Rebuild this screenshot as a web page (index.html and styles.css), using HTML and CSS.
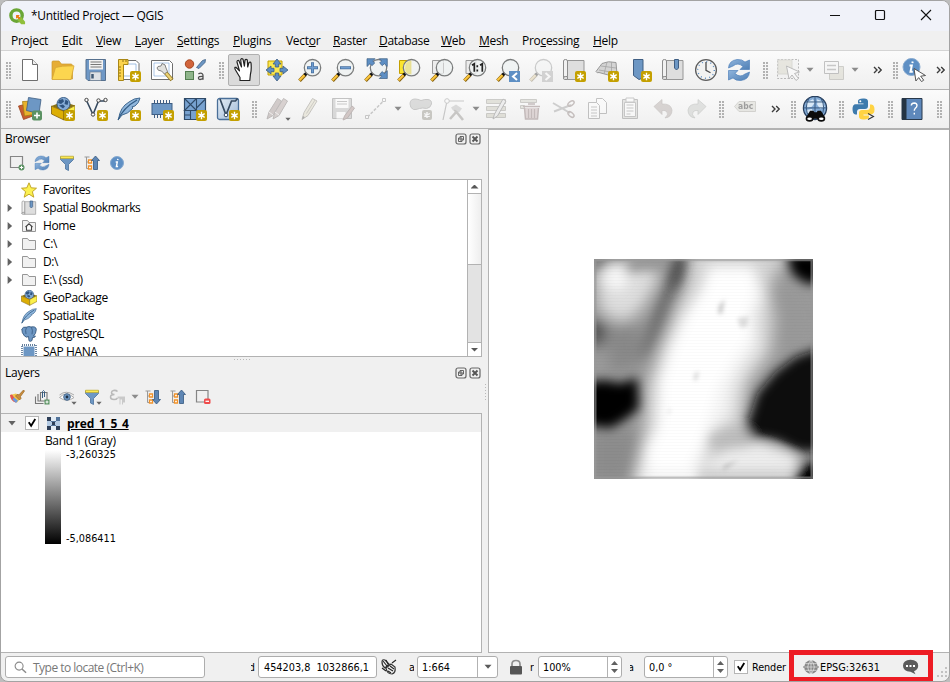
FILE: index.html
```html
<!DOCTYPE html>
<html lang="en">
<head>
<meta charset="utf-8">
<title>*Untitled Project — QGIS</title>
<link rel="stylesheet" href="styles.css">
</head>
<body>
<svg class="defs" width="0" height="0" aria-hidden="true">
  <defs>
    <linearGradient id="gBlue" x1="0" y1="0" x2="1" y2="1"><stop offset="0" stop-color="#8fb4dc"/><stop offset="1" stop-color="#4f7fb5"/></linearGradient>
    <linearGradient id="gPale" x1="0" y1="0" x2="1" y2="1"><stop offset="0" stop-color="#e6eef6"/><stop offset="1" stop-color="#9db8d6"/></linearGradient>
  </defs>
  <symbol id="badge" viewBox="0 0 24 24"><rect x="13" y="13" width="11" height="11" rx="2" fill="#c4a000"/><path d="M18.500 14.800v7.400M15.300 16.700l6.400 3.600M21.700 16.700l-6.400 3.600" stroke="#fff" stroke-width="1.400"/><circle cx="18.500" cy="18.500" r="1.800" fill="#fff"/></symbol>
  <symbol id="lens" viewBox="0 0 24 24"><path d="M1.500 22.700l5.700-5.900" stroke="#8a6410" stroke-width="3.600"/><path d="M1.500 22.300l5.400-5.600" stroke="#fcc63d" stroke-width="2"/><path d="M6.600 17.200l2.400-2.400" stroke="#111" stroke-width="3.200"/><circle cx="14.500" cy="9.700" r="8.200" fill="#eef1f2" fill-opacity=".82" stroke="#7b7d7d" stroke-width="1.300"/></symbol>
  <symbol id="drop" viewBox="0 0 8 6"><path d="M.5.800h7L4 4.800z" fill="#8b8b8b"/></symbol>
  <symbol id="more" viewBox="0 0 10 8"><path d="M1 1l3 3-3 3M5.200 1l3 3-3 3" fill="none" stroke="#3c3c3c" stroke-width="1.400"/></symbol>

  <symbol id="new" viewBox="0 0 24 24"><path d="M4.500 1.500h10l5 5v16h-15z" fill="#fff" stroke="#6e6e6e"/><path d="M14.500 1.500v5h5" fill="#eee" stroke="#6e6e6e"/></symbol>
  <symbol id="open" viewBox="0 0 24 24"><path d="M1 21V4q0-1 1-1h6l2.500 3H20q1.500 0 1.500 2v13z" fill="#e6ad35" stroke="#c99a2e" stroke-width=".7"/><path d="M4.500 9.500l7-1.300 11.500-.4-3 13.700H1z" fill="#fcd64f" stroke="#d6a634" stroke-width=".8"/></symbol>
  <symbol id="save" viewBox="0 0 24 24"><path d="M3 1.500h18.500v21H4l-2-2v-19z" fill="#6f98c6" stroke="#56708e"/><rect x="5" y="2" width="14" height="9.500" fill="#f2f2f2"/><path d="M6.500 4h11M6.500 6.500h11M6.500 9h11" stroke="#777"/><rect x="6" y="14" width="11" height="8.500" fill="#dde1e5" stroke="#68788a" stroke-width=".6"/><path d="M8.500 16v4.500" stroke="#415a75" stroke-width="2.500"/></symbol>
  <symbol id="layout" viewBox="0 0 24 24"><path d="M2 2.500h17l3 3v16H2z" fill="#fff" stroke="#6e6e6e"/><path d="M5 6h14v12H5z" fill="none" stroke="#8bb0dc" stroke-width=".8"/><path d="M1.500 1.500H11v5H6.500v16h-5z" fill="#fbd34c" stroke="#a98716"/><path d="M2 9h2M2 12h2M2 15h2M2 18h2M6 2v2M9 2v2" stroke="#87680c" stroke-width=".9"/><use href="#badge"/></symbol>
  <symbol id="manager" viewBox="0 0 24 24"><path d="M1.500 2.500h18l3 3v16h-21z" fill="#fff" stroke="#6e6e6e"/><path d="M4 5h15v13H4z" fill="none" stroke="#8bb0dc" stroke-width=".7"/><path d="M15 14l7 8" stroke="#907520" stroke-width="4"/><path d="M15 14l6.500 7.500" stroke="#ecd274" stroke-width="2.500"/><path d="M8 8.500l3-.5 1-2.500q4 .5 4 4.500l1.500 3.500-3 2.500-3-3q-4 0-4.500-3z" fill="#e2e2df" stroke="#666" stroke-width=".8"/></symbol>
  <symbol id="style" viewBox="0 0 24 24"><circle cx="6.500" cy="6" r="4.200" fill="#d1643b" stroke="#a64721"/><path d="M13.500 9.500l6-7 3-1-.5 3-6 6z" fill="#6d97c4" stroke="#3f5e83" stroke-width=".8"/><rect x="2.500" y="13.500" width="8" height="8" fill="#8fb58b" stroke="#537e50"/><path d="M15.400 15.900q2.500-1.500 4 0 .6.700.6 1.800v4M20 18.300q-4.600-.2-4.600 1.700 0 1.500 1.600 1.500 2.500 0 3-1.800" fill="none" stroke="#515151" stroke-width="1.300"/></symbol>

  <symbol id="hand" viewBox="0 0 24 24"><path d="M8 22.500v-3L3.500 12q-1.500-3 .4-2.700l3.600 3.500L5 4q0-2 1.800-1.500L9.500 9 8.700 1.700Q9.500-.2 11 1.200l1.400 7L13 2.100q1-1.500 2.300-.1l.4 7L17 4.500q1.300-1 2 .4.700 7-.6 11.600l-.6 6z" fill="#fff" stroke="#222" stroke-width="1.200" stroke-linejoin="round"/></symbol>
  <symbol id="pansel" viewBox="0 0 24 24"><path d="M3 3h14v14H3z" fill="#fce94f" stroke="#c4a000"/><g fill="#5e8fc4" stroke="#3d5e83" stroke-width=".8"><path d="M12 1l4 5h-2.300v3h-3.400V6H8z"/><path d="M12 23l4-5h-2.300v-3h-3.400v3H8z"/><path d="M1 12l5-4v2.300h3v3.400H6V16z"/><path d="M23 12l-5-4v2.300h-3v3.400h3V16z"/></g></symbol>
  <symbol id="zin" viewBox="0 0 24 24"><use href="#lens"/><path d="M14.500 4.200v11M9 9.700h11" stroke="#47709f" stroke-width="3"/><path d="M14.500 5v9.400M9.800 9.700h9.400" stroke="#6f9dd1" stroke-width="1.600"/></symbol>
  <symbol id="zout" viewBox="0 0 24 24"><use href="#lens"/><path d="M9 9.700h11" stroke="#47709f" stroke-width="3"/><path d="M9.800 9.700h9.400" stroke="#6f9dd1" stroke-width="1.600"/></symbol>
  <symbol id="zfull" viewBox="0 0 24 24"><use href="#lens"/><g fill="#5e8fc4" stroke="#3d5e83" stroke-width=".7"><path d="M3 .7h8L8.700 3l2 2L8 7.700l-2-2-3 2.800z"/><path d="M23.300.7h-8L17.600 3l-2 2 2.700 2.700 2-2 3 2.800z"/><path d="M23.300 20.500h-8l2.300-2.300-2-2 2.700-2.700 2 2 3-2.800z"/></g></symbol>
  <symbol id="zsel" viewBox="0 0 24 24"><path d="M2.500 2.500h11v13h-11z" fill="#fce52f" stroke="#c4a000"/><use href="#lens"/><path d="M9 5.500q2-2.500 5.500-3v14q-6-.5-6.500-6z" fill="#e8dd79" opacity=".65"/></symbol>
  <symbol id="zlay" viewBox="0 0 24 24"><path d="M2.500 2.500h11v13h-11z" fill="#ececec" stroke="#9a9a9a"/><use href="#lens"/><path d="M13.500 5v10" stroke="#c9c9c9"/></symbol>
  <symbol id="znat" viewBox="0 0 24 24"><path d="M3 2.500h10v13H3z" fill="#ececec" stroke="#9a9a9a"/><use href="#lens"/><path d="M9 7.300l2.300-1.500v8M17 7.300l2.300-1.500v8" fill="none" stroke="#222" stroke-width="1.700"/><path d="M14.300 7.200v2M14.300 11.500v2" stroke="#222" stroke-width="1.700"/></symbol>
  <symbol id="zlast" viewBox="0 0 24 24"><use href="#lens"/><path d="M13 13h11v11H13z" fill="#5e8fc4"/><path d="M21 15l-4 3.500 4 3.500" fill="none" stroke="#fff" stroke-width="2"/></symbol>
  <symbol id="znext" viewBox="0 0 24 24"><use href="#lens"/><path d="M13 13h11v11H13z" fill="#999"/><path d="M16.500 15l4 3.500-4 3.500" fill="none" stroke="#fff" stroke-width="2"/></symbol>
  <symbol id="mapsheet" viewBox="0 0 24 24"><path d="M5.500 2.500h16.500v19H5.500z" fill="#dedede" stroke="#969696"/><path d="M1.500 3q0-1.500 2-1.500t2 1.500v16H3q-1.500 0-1.500 1.500z" fill="#f1f1f1" stroke="#8c8c8c"/><path d="M1.500 20q0-1.500 2-1.500h2v3h-3q-1 0-1-1.500" fill="#ddd" stroke="#8c8c8c"/></symbol>
  <symbol id="newmap" viewBox="0 0 24 24"><use href="#mapsheet"/><use href="#badge"/></symbol>
  <symbol id="new3d" viewBox="0 0 24 24"><path d="M1 13.500Q2 15.500 4 14.500L17 18l5-2-1-11.500Q13 2.500 7 5.500z" fill="#d4d4d4" stroke="#999"/><path d="M6 8l15 2M4 12l17 3M12 4l-3 12M16.500 4v13" stroke="#a5a5a5" fill="none" stroke-width=".8"/><use href="#badge"/></symbol>
  <symbol id="newbm" viewBox="0 0 24 24"><path d="M5.500 1.500h9.500V20l-4 1.500-5.500-4z" fill="#6d97c4" stroke="#3f5e83"/><use href="#badge"/></symbol>
  <symbol id="bm" viewBox="0 0 24 24"><use href="#mapsheet"/><path d="M13.500 1.500h4V10l-2 2-2-2z" fill="#6d97c4" stroke="#3f5e83"/></symbol>
  <symbol id="clock" viewBox="0 0 24 24"><circle cx="12" cy="12" r="10.400" fill="#f2f2f1" stroke="#5d5d5d" stroke-width="1.300"/><circle cx="12" cy="12" r="8.300" fill="none" stroke="#5e8fc4" stroke-width="1.400" stroke-dasharray="1 3.345"/><path d="M12 4v8.300l4.500 2.400" fill="none" stroke="#4d4d4d" stroke-width="1.300"/></symbol>
  <symbol id="refresh" viewBox="0 0 24 24"><path d="M1.500 10Q2 2.500 10 1.500q5-.5 8 2.500l4.500-2v9.500H13l3-3Q11 4 6 8z" fill="url(#gBlue)" stroke="#3f76b5" stroke-width=".6"/><path d="M22.500 14Q22 21.500 14 22.500q-5 .5-8-2.500l-4.500 2v-9.500H11l-3 3q5 4.500 10 .5z" fill="url(#gBlue)" stroke="#3f76b5" stroke-width=".6"/></symbol>
  <symbol id="select" viewBox="0 0 24 24"><path d="M1.500 1.500h21v19h-21z" fill="#eee" stroke="#555" stroke-dasharray="2 1.500"/><path d="M2 2h14v14H2z" fill="#cfcb9c" stroke="#aaa68a"/><path d="M10.500 8l13 6-5 1.500 4 5-2.500 2-4-5.500-3 4z" fill="#fff" stroke="#555"/></symbol>
  <symbol id="deselect" viewBox="0 0 24 24"><path d="M8.500 8.500h14v13h-14z" fill="#cfcb9c" stroke="#8c8972"/><path d="M3.500 3.500h14v12h-14z" fill="#f6f6f6" stroke="#666"/><path d="M6 7.500h9M6 11.500h9" stroke="#777" stroke-width="1.500"/></symbol>
  <symbol id="identify" viewBox="0 0 24 24"><circle cx="9.500" cy="9" r="8.500" fill="#5e8fc4" stroke="#86a9cf"/><path d="M10.700 3.500l-.3 1.700M7.500 7.500h2.300l-1.300 6.200h2.300" fill="none" stroke="#fff" stroke-width="2"/><path d="M12 10.500l11.500 7-4.800.7 3 4-2.200 1.400-2.800-4-2.800 3.400z" fill="#fff" stroke="#444" stroke-width=".9"/></symbol>

  <symbol id="dsm" viewBox="0 0 24 24"><path d="M.5 9l12-3 5 12-12 4.500z" fill="#c95c31" stroke="#9d4420" stroke-width=".8"/><path d="M4.500 4.500l13-.5 2 13-13 2z" fill="#e8b22d" stroke="#a77d14" stroke-width=".8"/><path d="M10.500.5l12.500 2-2 14-12.500-3z" fill="#6d97c4" stroke="#3f5e83" stroke-width=".8"/><rect x="14" y="13.500" width="10" height="10" rx="2" fill="#5b9263"/><path d="M19 15.500v6M16 18.500h6" stroke="#fff" stroke-width="1.600"/></symbol>
  <symbol id="gpkg" viewBox="0 0 24 24"><path d="M.5 9L12 4.500 24 8.500 13 14z" fill="#8a7314"/><circle cx="12.500" cy="7" r="6.500" fill="#86acd6" stroke="#3b5f88"/><path d="M8 3l4-1 1 2.500-3 2.500-3-1zM14.500 2.500l3 2-1 3.500-3-1zM8 8.500l4-1 2 2-2 2z" fill="#2f5480"/><path d="M.5 9L13 14.300V23L.5 17z" fill="#dcae05" stroke="#80600a" stroke-width=".8"/><path d="M13 14.300L24 8.500v8.700L13 23z" fill="#fbf04c" stroke="#80600a" stroke-width=".8"/></symbol>
  <symbol id="newgpkg" viewBox="0 0 24 24"><use href="#gpkg"/><use href="#badge"/></symbol>
  <symbol id="newshp" viewBox="0 0 24 24"><path d="M2.500 3.500L9 17.500 14.500 4h7" fill="none" stroke="#364a60" stroke-width="1.600"/><g fill="#fff" stroke="#444"><circle cx="2.500" cy="3" r="1.700"/><circle cx="9" cy="17.500" r="1.700"/><circle cx="14.500" cy="3.500" r="1.700"/><circle cx="21.500" cy="3" r="1.700"/></g><use href="#badge"/></symbol>
  <symbol id="feather" viewBox="0 0 24 24"><path d="M1.500 22.500Q3 10 12 5q5-4 11-4-1 5-5 8l-3 .8 1 1.200Q11 17 5 18z" fill="#8fb6dc" stroke="#41688f"/><path d="M1 23Q6 11 20 3" fill="none" stroke="#315b84" stroke-width="1.200"/></symbol>
  <symbol id="newspl" viewBox="0 0 24 24"><use href="#feather"/><use href="#badge"/></symbol>
  <symbol id="mem" viewBox="0 0 24 24"><path d="M4.500 3v18M7.500 3v18M10.500 3v18M13.500 3v18M16.500 3v18M19.500 3v18" stroke="#3f5e83" stroke-width="1"/><rect x="2" y="6.500" width="20" height="11" fill="#6d97c4" stroke="#3f5e83"/><use href="#badge"/></symbol>
  <symbol id="mesh" viewBox="0 0 24 24"><path d="M1.500 1.500h21v21h-21z" fill="#78a2d0" stroke="#2f4a68" stroke-width="1.200"/><path d="M1.500 1.500l12 12M13.500 1.500l-12 12h21M13.500 1.500v21M13.500 11l9-9M7.500 13.500v9M1.500 18h6" stroke="#2f4a68" stroke-width="1.100" fill="none"/><use href="#badge"/></symbol>
  <symbol id="virt" viewBox="0 0 24 24"><rect x="1.500" y="1.500" width="21" height="21" rx="2" fill="url(#gPale)" stroke="#4a6f98" stroke-width="1.300"/><path d="M4 2l6 16L15.500 4h4l2-2.500" fill="none" stroke="#364a60" stroke-width="1.700"/><circle cx="10" cy="18" r="1.800" fill="#fff" stroke="#364a60"/><use href="#badge"/></symbol>

  <symbol id="pencil" viewBox="0 0 24 24"><path d="M4 22.500l2-7L14.500 1.500l4.500 2.500L10 18.500z" fill="#e0d28e" stroke="#796d51"/><path d="M8.500 16.500L17 3" stroke="#8d8158"/><path d="M4 22.500l1-3.500 2 1.200z" fill="#333"/></symbol>
  <symbol id="pencils" viewBox="0 0 24 24"><path d="M2 22l2-7L12.500 1.500l4 2.500L8 18.500z" fill="#a77a72" stroke="#68514d"/><path d="M8 22l2-7L18.500 1.500l4 2.500L14 18.500z" fill="#b98a80" stroke="#68514d"/><path d="M10 15l4 3M4 15l4 3" stroke="#f0e6e2"/></symbol>
  <symbol id="saveed" viewBox="0 0 24 24"><path d="M1.500 1.500h19v20h-19z" fill="#a8a8a8" stroke="#666"/><path d="M4.500 2h13v9h-13zM5.500 15h9v6.500h-9z" fill="#fff"/><path d="M6 4.500h10M6 7h10" stroke="#777"/><path d="M12 23l1.500-4L21 9l2.500 2-7 10z" fill="#bd7166" stroke="#76453f"/></symbol>
  <symbol id="digit" viewBox="0 0 24 24"><path d="M3.500 20L20 3.500" stroke="#777" stroke-dasharray="3 1.500" stroke-width="1.500"/><g fill="#fff" stroke="#777"><path d="M1.500 18.500h3v3h-3zM18.500 1.500h3v3h-3z"/></g></symbol>
  <symbol id="poly" viewBox="0 0 24 24"><path d="M1 7q0-5 5-5 3 0 6 1.500 4-1.500 7-1 4 .5 3.500 4.500-1 4-5 4.500-4-1-7 0-4 1.500-6 1Q1 11 1 7z" fill="#a9ada7" stroke="#777"/><rect x="13" y="13" width="10" height="10" rx="2" fill="#817b59"/><path d="M18 15v6M15.200 16.500l5.600 3M20.800 16.500l-5.600 3" stroke="#fff" stroke-width="1.400"/></symbol>
  <symbol id="vertex" viewBox="0 0 24 24"><path d="M1 23L5 4h17" fill="none" stroke="#777" stroke-width="1.200"/><circle cx="5" cy="4" r="2.300" fill="#fff" stroke="#777"/><path d="M8 22l8-9M12 12l9 11" stroke="#80796c" stroke-width="2.600"/><path d="M9 10.500l5-3 6 4-3 4-4-3-2 1z" fill="#aaa"/></symbol>
  <symbol id="modattr" viewBox="0 0 24 24"><path d="M1.500 2.500h19v4h-19zM1.500 9.500h19v4h-19zM1.500 16.500h19v4h-19z" fill="#c0bd8c" stroke="#83816a"/><path d="M8 22l1.500-5L18 2l3 2-8.500 15z" fill="#ddd" stroke="#555"/></symbol>
  <symbol id="delsel" viewBox="0 0 24 24"><path d="M2.500 2.500h16v3h-16zM2.500 8.500h4v3h-4z" fill="#c7c5a2" stroke="#83816a"/><path d="M5 9.500h17M10 7h7M6.500 11l1 11h12l1-11" fill="#d79b9b" stroke="#8d4f4f" stroke-width="1.500"/><path d="M10.500 12v9M13.500 12v9M16.500 12v9" stroke="#8d4f4f" stroke-width="1.200"/></symbol>
  <symbol id="cut" viewBox="0 0 24 24"><path d="M2 6l17 10M3 14.500L20 8" stroke="#888" stroke-width="2"/><ellipse cx="20" cy="6.500" rx="3.500" ry="2" transform="rotate(-35 20 6.500)" fill="none" stroke="#885c55" stroke-width="1.500"/><ellipse cx="20" cy="17.500" rx="3.500" ry="2" transform="rotate(40 20 17.500)" fill="none" stroke="#885c55" stroke-width="1.500"/></symbol>
  <symbol id="copy" viewBox="0 0 24 24"><path d="M12.500 1.500h6l4 4v11h-10z" fill="#fff" stroke="#666"/><path d="M4.500 5.500h8l3 3v13h-11z" fill="#fff" stroke="#666"/><path d="M7 10h6M7 13h6M7 16h6M7 19h6" stroke="#777"/></symbol>
  <symbol id="paste" viewBox="0 0 24 24"><path d="M5.500 2.500h15v19h-15z" fill="#c8c7be" stroke="#666"/><path d="M7.500 5.500h11v14h-11zM9 1h8v4H9z" fill="#fff" stroke="#777"/><path d="M9.500 8h7M9.500 11h7M9.500 14h7M9.500 17h4" stroke="#777"/></symbol>
  <symbol id="undo" viewBox="0 0 24 24"><path d="M4 9.500l8-7v4.500q9-.5 10 6 0 7-7 8 4-3.500 2-6-1.500-2-5-1.500v4z" fill="#b19387" stroke="#856e65" stroke-width=".7"/></symbol>
  <symbol id="redo" viewBox="0 0 24 24"><path d="M23 9.500l-8-7v4.500q-9-.5-10 6 0 7 7 8-4-3.500-2-6 1.500-2 5-1.500v4z" fill="#b5beb3" stroke="#788477" stroke-width=".7"/></symbol>
  <symbol id="labels" viewBox="0 0 24 24"><path d="M1.500 9.500L6 4.500h16.500v10H6z" fill="#d0cfb5" stroke="#999780"/></symbol>
  <symbol id="search" viewBox="0 0 24 24"><circle cx="12" cy="11" r="10.700" fill="#83abd6" stroke="#283f5d" stroke-width="1.200"/><path d="M4 6l6-3 2 3-3 4-4 1zM14 3l5 2 2 5-4 2-3-4zM4 13l5-1 2 4H5z" fill="#d9e9f7"/><path d="M1.500 11h21M12 .5v20M3 5.500h18M6.500 2q-5 9 0 17M17.500 2q5 9 0 17" fill="none" stroke="#38587f" stroke-width=".9"/><path d="M3.500 20l4-6.500h3l1 1.500h2l1-1.500h3l4 6.500-3 2-5.500-1h-1.500l-5 1z" fill="#0c0c0c"/><g fill="#fff" stroke="#0c0c0c" stroke-width="1.500"><ellipse cx="7" cy="21" rx="2.900" ry="2"/><ellipse cx="17.800" cy="21" rx="2.900" ry="2"/></g></symbol>
  <symbol id="python" viewBox="0 0 24 24"><path d="M11 1.500q5-.5 5 3V9q0 3-3 3H8q-3 0-3 3v2.500H3.500Q.5 17 .5 12T4 7.300h7.500V6.500H6V4q0-2.300 5-2.500z" fill="#3d7aad"/><circle cx="8.300" cy="4.200" r="1" fill="#fff"/><path d="M12 22.500q-5 .3-5-3V16q0-3 3-3h5q3 0 3-3V7.500h1.500q3 .5 3 5t-3.500 5H11.500v1H17V20q0 2.300-5 2.500z" fill="#ffd343"/><path d="M16 16.500l5.500 3-5.500 3" stroke="#333" stroke-width="1.100" fill="none"/></symbol>
  <symbol id="help" viewBox="0 0 24 24"><path d="M2 1.500h20v21H2z" fill="#5e88bb" stroke="#28384a"/><path d="M2 1.500h4.500v21H2z" fill="#243443"/><path d="M11.300 8.500q.2-2.500 3-2.500 2.700.1 2.700 2.600 0 1.600-1.800 2.800-.9.800-.9 2.300M14.300 15.800v1.800" fill="none" stroke="#fff" stroke-width="1.400"/></symbol>

  <symbol id="float" viewBox="0 0 12 12"><rect x="1" y="1" width="10" height="10" rx="2" fill="none" stroke="#666" stroke-width="1.200"/><path d="M5 3.500h3.500V7H5zM3.500 5H7v3.500H3.500z" fill="#eee" stroke="#555" stroke-width=".9"/></symbol>
  <symbol id="close" viewBox="0 0 12 12"><rect x="1" y="1" width="10" height="10" rx="2" fill="none" stroke="#666" stroke-width="1.200"/><path d="M3.500 3.500l5 5M8.500 3.500l-5 5" stroke="#555" stroke-width="1.900"/></symbol>
  <symbol id="addlay" viewBox="0 0 16 16"><path d="M1.500 1.500h12v11h-12z" fill="none" stroke="#858585" stroke-width="1.200"/><circle cx="12.500" cy="12.500" r="3" fill="#5b9263"/><path d="M12.500 10.800v3.400M10.800 12.500h3.400" stroke="#fff"/></symbol>
  <symbol id="filter" viewBox="0 0 16 16"><path d="M1.500 2h13v2.500l-5 5v6l-3-1.500V9.500l-5-5z" fill="#6d97c4" stroke="#4a719c" stroke-width=".8"/><path d="M1.500 1.200h13v2.300h-13z" fill="#fce94f" stroke="#b7a126" stroke-width=".6"/></symbol>
  <symbol id="collapse" viewBox="0 0 16 16"><path d="M.5 2h5M2.500 2v11.500h3M2.500 7h3" fill="none" stroke="#999"/><path d="M4.500 5h3v3h-3zM4.500 11h3v3h-3z" fill="#fff" stroke="#f0922b" stroke-width="1.300"/><path d="M11.500 1l4 4.500h-2V14.500h-4v-9h-2z" fill="#5e86b4" stroke="#35587f" stroke-width=".8"/></symbol>
  <symbol id="expand" viewBox="0 0 16 16"><path d="M.5 2h5M2.500 2v11.500h3M2.500 7h3" fill="none" stroke="#999"/><path d="M4.500 5h3v3h-3zM4.500 11h3v3h-3z" fill="#fff" stroke="#f0922b" stroke-width="1.300"/><path d="M11.500 15l4-4.500h-2V1.500h-4v9h-2z" fill="#5e86b4" stroke="#35587f" stroke-width=".8"/></symbol>
  <symbol id="info" viewBox="0 0 16 16"><circle cx="8" cy="8" r="6.500" fill="#5e8fc4" stroke="#86a9cf"/><path d="M8.900 3.800l-.2 1.300M6.700 7h1.600l-.9 4.500h1.700" fill="none" stroke="#fff" stroke-width="1.400"/></symbol>
  <symbol id="star" viewBox="0 0 16 16"><path d="M8 .8l2.200 5 5.300.4-4.100 3.500 1.400 5.500L8 12.200l-4.800 3 1.400-5.500L.5 6.200l5.300-.4z" fill="#fcf151" stroke="#bb9d1d" stroke-width=".9"/></symbol>
  <symbol id="folder" viewBox="0 0 16 16"><path d="M1.500 13.500v-11h5l1.500 2h6.500v9z" fill="#f1f1f1" stroke="#969696"/></symbol>
  <symbol id="home" viewBox="0 0 16 16"><use href="#folder"/><path d="M4.500 9L8 5.800 11.500 9M5.500 8.500v3.800h5V8.500" fill="#fff" stroke="#444" stroke-width="1.100"/></symbol>
  <symbol id="pg" viewBox="0 0 16 16"><path d="M.8 3Q2 .5 5.500 1.200 8 0 10 1q5-1 5.300 2.500Q15 8 12.500 10l2 .3q-1 1.500-3 1.200l-.5 3q-1.500 1.500-3 .3l-.5-4.300q-2 1.500-4-.5Q.5 6.500.8 3z" fill="#6d97c4" stroke="#35587f" stroke-width=".9"/><path d="M5.500 1.500Q4 4 5 8M10.500 1.300q1.500 3 .5 7" stroke="#35587f" stroke-width=".8" fill="none"/></symbol>
  <symbol id="hana" viewBox="0 0 16 16"><path d="M1 1h14v14H1z" fill="none" stroke="#35587f" stroke-width="1.400" stroke-dasharray="1 1"/><path d="M2.500 2.500h11v11h-11z" fill="#6d97c4"/></symbol>
  <symbol id="brush" viewBox="0 0 16 16"><path d="M1 6l6-1.500 5 4.500-4 4.500Q2 13 1 6z" fill="#f2c64b"/><path d="M1 6l2-.5 5 7-1 1Q2 13 1 6z" fill="#e45353"/><path d="M3.500 10.500L7 14l2-2.500-4-3z" fill="#699bdf"/><path d="M8 5.500l2 .3L14.500 1l1 1-4 5.500.5 2-1.500 1.500-4-4z" fill="#c98d3d" stroke="#9b6520" stroke-width=".7"/></symbol>
  <symbol id="group" viewBox="0 0 16 16"><path d="M1.500 7.500v7h8M4 5v7h7M6.500 3.500h6.500v8.500H6.500z" fill="none" stroke="#777" stroke-width="1.100"/><path d="M8.500 9V2.500q1-2 2 0V8" fill="none" stroke="#385e83"/><path d="M10.500 10.500h5v5h-5z" fill="#5b9263"/><path d="M13 11.500v3M11.500 13h3" stroke="#fff"/></symbol>
  <symbol id="eye" viewBox="0 0 16 16"><path d="M.5 8.500Q7 1.500 15 8.500 8 14 .5 8.500z" fill="#fff" stroke="#aaa"/><path d="M.5 6Q7 .5 15 6" fill="none" stroke="#aaa"/><circle cx="8" cy="8" r="3.300" fill="#6d97c4" stroke="#4c6b8c"/><circle cx="8" cy="8" r="1.400" fill="#203246"/></symbol>
  <symbol id="expr" viewBox="0 0 16 16"><path d="M8.500 2.500Q7 1 4.500 1.500q-2 .5-2 2 0 2 3 2-4 0-4 2.500Q1.500 10.500 5 10.500q2.500 0 3.500-1.500" fill="none" stroke="#b9b9b9" stroke-width="1.500"/><path d="M8.500 7.500H16v6h-2v2h-1v-5h-1.500v5h-1V9.500h-2z" fill="#c9c9c9"/></symbol>
  <symbol id="remove" viewBox="0 0 16 16"><path d="M1.500 1.500h11.500v11.500H1.500z" fill="none" stroke="#858585" stroke-width="1.200"/><rect x="9" y="9.500" width="6.500" height="5.500" rx="1.500" fill="#ef4b4b"/><path d="M10.500 12.300h3.500" stroke="#fff" stroke-width="1.300"/></symbol>
  <symbol id="raster" viewBox="0 0 13 13"><path d="M0 0h13v13H0z" fill="#b4cbe4"/><path d="M0 0h4v4H0zM5 5h3v3H5zM0 9h4v4H0zM9 9h4v4H9z" fill="#2e3f58"/><path d="M4 0h5v4H4zM4 9h5v4H4z" fill="#e3ecf5"/><path d="M9 0h4v4H9zM4 4h5v1H4zM4 8h5v1H4z" fill="#52739a"/></symbol>
  <symbol id="globe" viewBox="0 0 16 16"><circle cx="8" cy="8" r="6.800" fill="#868686"/><path d="M0 8h16" stroke="#777"/><path d="M8 1v14M1.500 8h13M2.300 4.700h11.400M2.300 11.300h11.400M8 1Q1.500 8 8 15M8 1q6.500 7 0 14" fill="none" stroke="#ececec" stroke-width=".7"/></symbol>
  <symbol id="mark" viewBox="0 0 14 14"><path d="M3.200 6L6 10.200 10.800 2.300" fill="none" stroke="#000" stroke-width="2.100"/></symbol>
</svg>

<div class="window">
  <header class="titlebar">
    <svg class="logo" viewBox="0 0 18 18"><circle cx="8" cy="8" r="6" fill="none" stroke="#6aa636" stroke-width="3.600"/><path d="M10 9.500h3l4 5v2.700h-4L9 13z" fill="#8fbf3c"/><path d="M7.500 7.500h4l-1.300 1.300 2 2-1.500 1.500-2-2-1.300 1.200z" fill="#ee7913"/></svg>
    <span class="title">*Untitled Project — QGIS</span>
    <svg class="winctl" viewBox="0 0 104 14"><path d="M0 6.500h10" stroke="#111" stroke-width="1.100"/><rect x="45.500" y="1.500" width="9" height="9" rx="1" fill="none" stroke="#111" stroke-width="1.200"/><path d="M91 1l10 10M101 1L91 11" stroke="#111" stroke-width="1.100"/></svg>
  </header>
  <nav class="menubar">
    <span>Pro<u>j</u>ect</span><span><u>E</u>dit</span><span><u>V</u>iew</span><span><u>L</u>ayer</span><span><u>S</u>ettings</span><span><u>P</u>lugins</span><span>Vect<u>o</u>r</span><span><u>R</u>aster</span><span><u>D</u>atabase</span><span><u>W</u>eb</span><span><u>M</u>esh</span><span>Pro<u>c</u>essing</span><span><u>H</u>elp</span>
  </nav>
  <div class="toolbar bar-one">
    <i class="grip"></i>
    <svg><use href="#new"/></svg><svg><use href="#open"/></svg><svg><use href="#save"/></svg><svg><use href="#layout"/></svg><svg><use href="#manager"/></svg><svg><use href="#style"/></svg>
    <i class="grip"></i>
    <span class="pressed"><svg><use href="#hand"/></svg></span><svg><use href="#pansel"/></svg><svg><use href="#zin"/></svg><svg><use href="#zout"/></svg><svg><use href="#zfull"/></svg><svg><use href="#zsel"/></svg><svg><use href="#zlay"/></svg><svg><use href="#znat"/></svg><svg><use href="#zlast"/></svg><svg class="off"><use href="#znext"/></svg><svg><use href="#newmap"/></svg><svg><use href="#new3d"/></svg><svg><use href="#newbm"/></svg><svg><use href="#bm"/></svg><svg><use href="#clock"/></svg><svg><use href="#refresh"/></svg>
    <i class="grip"></i>
    <svg class="off"><use href="#select"/></svg><svg class="drop"><use href="#drop"/></svg><svg class="off"><use href="#deselect"/></svg><svg class="drop"><use href="#drop"/></svg><svg class="more spaced"><use href="#more"/></svg>
    <i class="grip"></i>
    <svg><use href="#identify"/></svg><svg class="more"><use href="#more"/></svg>
  </div>
  <div class="toolbar bar-two">
    <i class="grip"></i>
    <svg><use href="#dsm"/></svg><svg><use href="#newgpkg"/></svg><svg><use href="#newshp"/></svg><svg><use href="#newspl"/></svg><svg><use href="#mem"/></svg><svg><use href="#mesh"/></svg><svg><use href="#virt"/></svg>
    <i class="grip"></i>
    <span class="with-menu"><svg class="off"><use href="#pencils"/></svg><svg class="corner"><use href="#drop"/></svg></span><svg class="off"><use href="#pencil"/></svg><svg class="off"><use href="#saveed"/></svg><svg class="off"><use href="#digit"/></svg><svg class="drop"><use href="#drop"/></svg><svg class="off"><use href="#poly"/></svg><svg class="off"><use href="#vertex"/></svg><svg class="drop"><use href="#drop"/></svg><svg class="off"><use href="#modattr"/></svg><svg class="off"><use href="#delsel"/></svg><svg class="off"><use href="#cut"/></svg><svg class="off"><use href="#copy"/></svg><svg class="off"><use href="#paste"/></svg><svg class="off"><use href="#undo"/></svg><svg class="off"><use href="#redo"/></svg>
    <i class="grip"></i>
    <span class="tag off"><svg><use href="#labels"/></svg><b>abc</b></span><svg class="more"><use href="#more"/></svg>
    <i class="grip tight"></i>
    <svg class="big"><use href="#search"/></svg>
    <i class="grip tight"></i>
    <svg><use href="#python"/></svg>
    <i class="grip"></i>
    <svg><use href="#help"/></svg>
    <i class="grip"></i>
  </div>

  <main class="workspace">
    <aside class="docks">
      <section class="dock">
        <div class="dock-head"><span>Browser</span><svg><use href="#float"/></svg><svg><use href="#close"/></svg></div>
        <div class="dock-tools browser-tools"><svg><use href="#addlay"/></svg><svg><use href="#refresh"/></svg><svg><use href="#filter"/></svg><svg><use href="#collapse"/></svg><svg><use href="#info"/></svg></div>
        <div class="browser-box">
          <ul class="tree">
            <li><i></i><svg><use href="#star"/></svg>Favorites</li>
            <li><i class="arrow"></i><svg><use href="#bm"/></svg>Spatial Bookmarks</li>
            <li><i class="arrow"></i><svg><use href="#home"/></svg>Home</li>
            <li><i class="arrow"></i><svg><use href="#folder"/></svg>C:\</li>
            <li><i class="arrow"></i><svg><use href="#folder"/></svg>D:\</li>
            <li><i class="arrow"></i><svg><use href="#folder"/></svg>E:\ (ssd)</li>
            <li><i></i><svg><use href="#gpkg"/></svg>GeoPackage</li>
            <li><i></i><svg><use href="#feather"/></svg>SpatiaLite</li>
            <li><i></i><svg><use href="#pg"/></svg>PostgreSQL</li>
            <li><i></i><svg><use href="#hana"/></svg>SAP HANA</li>
          </ul>
          <div class="scroll"><span class="sbtn up"></span><span class="thumb"></span><span class="track"></span><span class="sbtn down"></span></div>
        </div>
      </section>
      <div class="splitter"></div>
      <section class="dock layers">
        <div class="dock-head"><span>Layers</span><svg><use href="#float"/></svg><svg><use href="#close"/></svg></div>
        <div class="dock-tools layer-tools"><svg><use href="#brush"/></svg><svg><use href="#group"/></svg><span class="with-menu"><svg><use href="#eye"/></svg><svg class="corner"><use href="#drop"/></svg></span><span class="with-menu"><svg><use href="#filter"/></svg><svg class="corner"><use href="#drop"/></svg></span><svg><use href="#expr"/></svg><svg class="drop"><use href="#drop"/></svg><svg><use href="#expand"/></svg><svg><use href="#collapse"/></svg><svg><use href="#remove"/></svg></div>
        <div class="layer-box">
          <div class="layer-row"><i class="arrow open"></i><span class="check"><svg><use href="#mark"/></svg></span><svg class="ras"><use href="#raster"/></svg><b>pred_1_5_4</b></div>
          <div class="band">Band 1 (Gray)</div>
          <div class="legend"><span class="ramp"></span><div class="limits"><span>-3,260325</span><span>-5,086411</span></div></div>
        </div>
      </section>
    </aside>
    <div class="vsplit"></div>
    <div class="canvas">
      <svg class="prediction" viewBox="30 27 657 660" preserveAspectRatio="none">
        <defs>
          <filter id="b1" x="-50%" y="-50%" width="200%" height="200%"><feGaussianBlur stdDeviation="16"/></filter>
          <filter id="b2" x="-50%" y="-50%" width="200%" height="200%"><feGaussianBlur stdDeviation="22"/></filter>
          <filter id="b3" x="-50%" y="-50%" width="200%" height="200%"><feGaussianBlur stdDeviation="7"/></filter>
          <pattern id="scan" width="9" height="9" patternUnits="userSpaceOnUse"><path d="M0 0h9v3H0z" fill="#000" fill-opacity=".018"/></pattern>
        </defs>
        <rect x="30" y="27" width="657" height="660" fill="#9a9a9a"/>
        <g filter="url(#b2)">
          <path d="M310 0H620L550 120 570 200 560 310 490 400 470 560 640 600 640 720H150L180 560 190 400 260 220z" fill="#d2d2d2"/>
          <path d="M30 50L190 40 230 80 170 180 120 215 50 190z" fill="#dedede"/>
          <path d="M265 20h50l-25 110-65 130-40 70-15-20 45-130z" fill="#606060"/>
          <path d="M20 190L60 220 60 280 20 290z" fill="#303030"/>
          <path d="M70 230l90-20 10 130-90 30z" fill="#888"/>
          <path d="M580 130l70 0 30 120-60 60-50-40z" fill="#999"/>
          <path d="M20 540h150l-10 60-30 100H20z" fill="#8c8c8c"/>
        </g>
        <g filter="url(#b2)">
          <path d="M370 45H510L540 140 520 200 525 290 470 370 450 420 440 500 370 560 350 720H160L190 590 215 530 225 390 255 290 295 205 355 110z" fill="#f6f6f6"/>
        </g>
        <g filter="url(#b1)">
          <circle cx="98" cy="85" r="36" fill="#f6f6f6"/>
          <path d="M385 65H500L510 140 485 190 495 260 435 350 400 410 375 500 340 600 310 660H200L200 600 235 530 238 400 272 300 312 210 368 120z" fill="#fff"/>
          <path d="M370 560l70-30 70 20-10 40-110 10z" fill="#b8b8b8" fill-opacity=".8"/>
          <path d="M340 650l100-50 90-14 105 40 0 25-80 20z" fill="#ededed"/>
          <path d="M350 660h250v40H340z" fill="#cfcfcf"/>
          <path d="M0 398L60 390 110 400 160 383 165 475 125 508 80 535 0 525z" fill="#000"/>
          <path d="M610 10h110v85l-50 8-45-30z" fill="#000"/>
          <path d="M635 320L720 290V605H645L580 572 500 558 488 530 520 430 575 365z" fill="#101010"/>
          <path d="M625 710l30-70h60v75z" fill="#000"/>
          <path d="M275 20h30l-15 70-30 40z" fill="#454545"/>
          <path d="M20 10h70l-25 25-45 40z" fill="#7a7a7a"/>
          <path d="M120 70l25-55 110-10-10 45-70 10z" fill="#989898"/>
        </g>
        <g filter="url(#b3)"><path d="M422 148l-8 44-12-2 4-24z" fill="#c8c8c8"/><path d="M460 205l35-6-5 30-20 5z" fill="#ddd"/><path d="M345 365l-8 28-8-4 4-20z" fill="#d4d4d4"/><path d="M262 470l-5 22-7-3z" fill="#ddd"/><path d="M465 630l-50 35 5-20z" fill="#c4c4c4"/></g>
        <rect x="30" y="27" width="657" height="660" fill="url(#scan)"/>
        <path d="M34 27v660M30 30h657M683 27v660M30 683h657" stroke="#9a9a9a" stroke-opacity=".6" stroke-width="7" fill="none"/>
      </svg>
    </div>
  </main>

  <footer class="status">
    <div class="locate"><svg viewBox="0 0 14 14"><circle cx="5.500" cy="5.500" r="4.300" fill="none" stroke="#8a8a8a" stroke-width="1.200"/><path d="M8.600 8.600l4.400 4" stroke="#8a8a8a" stroke-width="1.600"/></svg><span>Type to locate (Ctrl+K)</span></div>
    <span class="cut cut-d">d</span>
    <div class="field coords">454203,8&nbsp; 1032866,1</div>
    <svg class="extent" viewBox="0 0 18 18"><path d="M2 4q0-3 3-2l4 4-4 4q-3-2-3-6zM6 10l5-4 4 3q1 6-3 7-5 0-6-6z" fill="#eee" stroke="#333" stroke-width="1.200"/><path d="M3 3l4 5M6 2l2 4M8 10l5 3M10 8l4 3M8 13l3 2M12 5l4-3M2 10l4 3" stroke="#222" stroke-width="1.100"/></svg>
    <span class="cut cut-a">a</span>
    <div class="field combo"><span>1:664</span><i><svg><use href="#drop"/></svg></i></div>
    <svg class="lock" viewBox="0 0 14 16"><path d="M3 8V5q0-3.500 4-3.500T11 5v3" fill="none" stroke="#8e8e8e" stroke-width="1.700"/><rect x="1" y="7" width="12" height="8.500" rx="1" fill="#565656"/></svg>
    <span class="cut cut-r">r</span>
    <div class="field spin"><span>100%</span><i></i></div>
    <span class="cut cut-b">a</span>
    <div class="field spin"><span>0,0 °</span><i></i></div>
    <span class="check"><svg><use href="#mark"/></svg></span>
    <span class="render">Render</span>
    <svg class="globe"><use href="#globe"/></svg>
    <span class="epsg">EPSG:32631</span>
    <svg class="bubble" viewBox="0 0 18 16"><path d="M8.500.8q7.700.3 7.700 6 0 4-4.200 5.400l1.500 3-5-2.500Q1 12.500 1 6.800T8.500.8z" fill="#5b5b5b"/><path d="M4 6h2v2H4zM7.500 6h2v2h-2zM11 6h2v2h-2z" fill="#fff"/></svg>
    <svg class="sizegrip" viewBox="0 0 12 12"><path d="M9 1h2v2H9zM5 5h2v2H5zM9 5h2v2H9zM1 9h2v2H1zM5 9h2v2H5zM9 9h2v2H9z" fill="#c2c2c2"/></svg>
  </footer>
  <div class="highlight"></div>
</div>
</body>
</html>
```
FILE: styles.css
```css
* { box-sizing: border-box; }
body { margin: 0; background: #bdbdbd; font: 12px/18px "Open Sans", "Noto Sans", sans-serif; color: #000; overflow: hidden; }
.defs { display: block; position: absolute; }
svg { display: block; flex: none; }
.window { position: relative; width: 950px; height: 682px; display: flex; flex-direction: column; overflow: hidden; background: #f0f0f0; border: 1px solid #a3a3a3; border-radius: 8px; }

.titlebar { height: 30px; flex: none; display: flex; align-items: center; padding: 0 15px 0 8px; background: #f0f2f9; }
.logo { width: 17px; height: 17px; }
.title { margin-left: 5px; flex: 1; letter-spacing: -.32px; }
.winctl { width: 104px; height: 14px; }
.menubar { height: 19px; flex: none; padding-left: 10px; display: grid; grid-template-columns: 51px 34px 39px 42px 56px 53px 47px 46px 62px 38px 43px 71px 40px; line-height: 20px; white-space: nowrap; letter-spacing: -.3px; }
.menubar u { text-underline-offset: 1px; }

.toolbar { flex: none; display: grid; align-items: center; justify-items: center; background: linear-gradient(#fbfbfb, #efefef); }
.toolbar svg { width: 24px; height: 24px; }
.toolbar svg.big { width: 26px; height: 26px; }
.bar-one { height: 40px; border-top: 1px solid #d4d4d4; border-bottom: 1px solid #b2b2b2; grid-template-columns: 12.5px repeat(6, 33px) 16px repeat(16, 33px) 16px 33px 11px 35px 9.5px 32px 4px 36px 18px; }
.bar-two { height: 38px; grid-template-columns: 12.5px repeat(7, 33px) 16px repeat(4, 33px) 11px 34px 33px 10px repeat(7, 33px) 17px 33px 29px 5px 39px 14px 31px 19px 27px 24px; }
.grip { width: 5px; height: 17px; margin-left: 3px; background: radial-gradient(circle at 1px 1px, #b0b0b0 .7px, transparent 1px) 0 0 / 3px 3px; }
.grip.tight { margin-left: 0; }
.toolbar .off { opacity: .36; filter: grayscale(.6); }
.pressed { width: 32px; height: 32px; display: grid; place-items: center; border: 1px solid #b0b0b0; border-radius: 2px; background: #dadada; }
.toolbar svg.drop, .dock-tools svg.drop { width: 8px; height: 6px; }
.toolbar svg.more { width: 10px; height: 8px; }
.toolbar svg.spaced { margin-left: 4px; }
.with-menu { position: relative; display: block; }
.toolbar .with-menu svg.corner, .dock-tools .with-menu svg.corner { position: absolute; width: 6px; height: 5px; right: -2px; bottom: -1px; filter: brightness(.75); }
.tag { position: relative; }
.tag b { position: absolute; left: 5px; top: 4px; font: bold 8.5px/10px "DejaVu Sans Condensed", "DejaVu Sans", sans-serif; }

.workspace { flex: 1; min-height: 0; display: flex; }
.docks { width: 481px; flex: none; display: flex; flex-direction: column; border-top: 1px solid #b2b2b2; }
.dock-head { height: 20px; display: flex; align-items: center; padding: 0 1px 1px 4px; letter-spacing: -.25px; }
.dock-head span { flex: 1; }
.dock-head svg { width: 12px; height: 12px; margin-left: 2px; }
.dock-tools { height: 30px; display: flex; align-items: center; padding: 0 0 2px 8px; gap: 9px; }
.dock-tools svg { width: 16px; height: 16px; }
.browser-box { height: 178px; display: flex; border: 1px solid #b2b2b2; border-left: 0; background: #fff; overflow: hidden; }
.tree { flex: 1; margin: 0; padding: 1px 0 0 6px; list-style: none; letter-spacing: -.38px; }
.tree li { height: 18px; display: flex; align-items: center; white-space: nowrap; }
.tree i { width: 6px; height: 8px; }
.tree svg { width: 16px; height: 16px; margin: 0 6px 0 8px; }
.arrow { background: #626262; clip-path: polygon(10% 0, 85% 50%, 10% 100%); }
.scroll { width: 14px; border-left: 1px solid #b2b2b2; display: flex; flex-direction: column; }
.sbtn { height: 13px; display: grid; place-items: center; }
.sbtn::before { content: ""; width: 8px; height: 4px; background: #585858; }
.up::before { clip-path: polygon(0 100%, 50% 0, 100% 100%); }
.down::before { clip-path: polygon(0 0, 100% 0, 50% 100%); }
.thumb { height: 72px; border: solid #b2b2b2; border-width: 1px 0; background: linear-gradient(90deg, #fff, #eee); }
.track { flex: 1; background: #e3e3e3; border-bottom: 1px solid #b2b2b2; }
.splitter { height: 6px; background: repeating-linear-gradient(90deg, #b9b9b9 0 1px, transparent 1px 3px) 233px 2px / 17px 1px no-repeat; }
.layers { flex: 1; display: flex; flex-direction: column; }
.layer-tools .drop { margin: 0 -3px 0 -3px; }
.layer-box { flex: 1; border: 1px solid #b2b2b2; border-left: 0; background: #fff; }
.layer-row { height: 18px; display: flex; align-items: center; background: #f0f0f0; padding-left: 7px; }
.layer-row b { letter-spacing: -.15px; text-decoration: underline; margin: 1px 0 0 7px; }
.arrow.open { width: 8px; height: 5px; clip-path: polygon(0 0, 100% 0, 50% 100%); }
.check { width: 14px; height: 14px; border: 1px solid #b5b5b5; background: #fff; display: block; }
.check svg { width: 12px; height: 12px; }
.layer-row .check { margin-left: 9px; }
.ras { width: 13px; height: 13px; margin-left: 8px; }
.band { height: 16px; line-height: 17px; padding-left: 44px; letter-spacing: -.38px; }
.legend { display: flex; height: 96px; padding: 2px 0 0 44px; font: 10.8px/14px "DejaVu Sans Condensed", "DejaVu Sans", sans-serif; }
.ramp { width: 16px; background: linear-gradient(#fff, #000); }
.limits { margin: -2px 0 -2px 5px; display: flex; flex-direction: column; justify-content: space-between; }
.vsplit { width: 7px; flex: none; border-top: 1px solid #b2b2b2; border-right: 1px solid #b2b2b2; background: repeating-linear-gradient(#b9b9b9 0 1px, transparent 1px 3px) 3px 255px / 1px 17px no-repeat; }
.canvas { flex: 1; background: #fff; border-top: 2px solid #b2b2b2; padding: 129px 0 0 105px; border-bottom: 1px solid #b2b2b2; }
.prediction { width: 219px; height: 220px; }

.status { height: 28px; flex: none; display: flex; align-items: center; padding-left: 4px; font: 10.8px/14px "DejaVu Sans Condensed", "DejaVu Sans", sans-serif; white-space: nowrap; }
.locate { width: 200px; height: 22px; display: flex; align-items: center; border: 1px solid #adadad; border-radius: 3px; background: #fff; color: #777; padding: 1px 0 0 8px; font: 12px/18px "Open Sans", sans-serif; letter-spacing: -.52px; }
.locate svg { width: 13px; height: 13px; margin-right: 6px; }
.field { height: 22px; border: 1px solid #adadad; border-radius: 3px; background: #fff; display: flex; align-items: center; padding-left: 4px; }
.combo span, .spin span { flex: 1; padding-top: 2px; }
.cut { display: flex; overflow: hidden; height: 14px; margin-top: 2px; }
.cut-d { width: 4px; margin: 2px 3px 0 46px; justify-content: flex-end; }
.coords { width: 119px; padding: 2px 0 0 5px; }
.extent { width: 18px; height: 18px; margin-left: 3px; }
.cut-a { width: 5px; margin: 2px 3px 0 11px; }
.combo { width: 81px; }
.combo i { width: 20px; height: 100%; border-left: 1px solid #b2b2b2; display: grid; place-items: center; }
.combo i svg { width: 8px; height: 6px; filter: brightness(.65); }
.lock { width: 14px; height: 16px; margin-left: 11px; }
.cut-r { width: 4px; margin: 2px 4px 0 7px; }
.spin { width: 84px; }
.spin i { width: 14px; height: 100%; border-left: 1px solid #b2b2b2; display: flex; flex-direction: column; align-items: center; justify-content: center; gap: 4px; }
.spin i::before, .spin i::after { content: ""; width: 7px; height: 4px; background: #606060; }
.spin i::before { clip-path: polygon(0 100%, 50% 0, 100% 100%); }
.spin i::after { clip-path: polygon(0 0, 100% 0, 50% 100%); }
.cut-b { width: 4px; margin: 2px 10px 0 8px; justify-content: flex-end; }
.status .check { margin-left: 6px; }
.render { width: 36px; margin: 2px 0 0 4px; letter-spacing: -.1px; }
.globe { width: 16px; height: 16px; margin-left: 15px; }
.epsg { width: 62px; margin: 2px 0 0 1px; }
.bubble { width: 18px; height: 16px; margin-left: 20px; }
.sizegrip { width: 12px; height: 12px; margin: 10px 0 0 16px; }
.highlight { position: absolute; left: 788px; top: 649px; width: 144px; height: 32px; border: 5px solid #ed1c24; }
```
